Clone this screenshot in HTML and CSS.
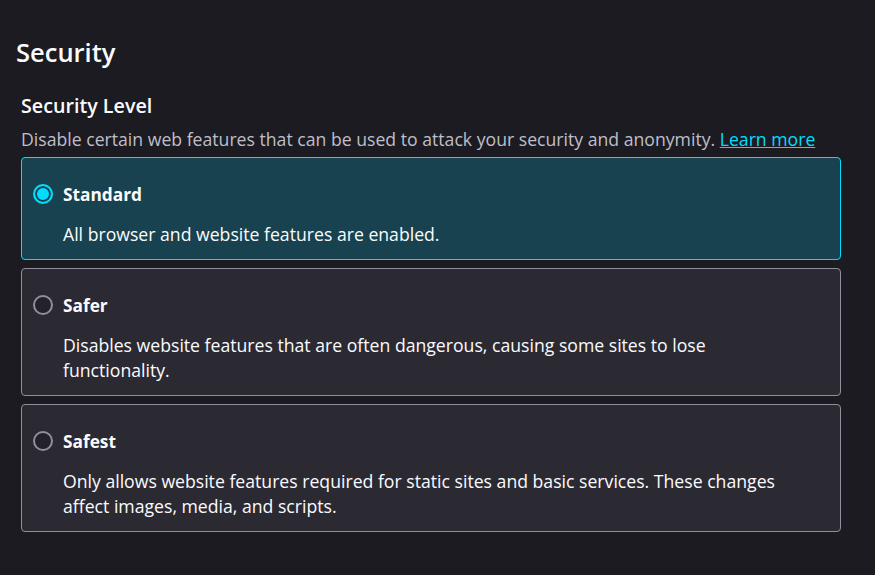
FILE: index.html
```html
<!DOCTYPE html>
<html>
<head>
<meta charset="utf-8">
<link rel="stylesheet" href="styles.css">
</head>
<body>
<main class="page">
  <h1 class="title">Security</h1>
  <h2 class="subtitle">Security Level</h2>
  <p class="intro">Disable certain web features that can be used to attack your security and anonymity. <a class="link" href="#">Learn more</a></p>
  <div class="options">
    <label class="option option-selected">
      <span class="option-head"><span class="radio radio-checked"></span><span class="option-name">Standard</span></span>
      <span class="option-desc">All browser and website features are enabled.</span>
    </label>
    <label class="option">
      <span class="option-head"><span class="radio"></span><span class="option-name">Safer</span></span>
      <span class="option-desc">Disables website features that are often dangerous, causing some sites to lose functionality.</span>
    </label>
    <label class="option">
      <span class="option-head"><span class="radio"></span><span class="option-name">Safest</span></span>
      <span class="option-desc">Only allows website features required for static sites and basic services. These changes affect images, media, and scripts.</span>
    </label>
  </div>
</main>
</body>
</html>
```
FILE: styles.css
```css
html, body {
  margin: 0;
  padding: 0;
  background: #1c1b22;
  color: #fbfbfe;
  font-family: "Open Sans", "Noto Sans", sans-serif;
}
.page {
  padding: 34px 34px 0 21px;
}
.title {
  margin: 0 0 0 -5px;
  font-size: 25.5px;
  font-weight: 600;
  line-height: 36px;
}
.subtitle {
  margin: 23px 0 0 0;
  font-size: 19.7px;
  font-weight: 600;
  line-height: 26px;
}
.intro {
  margin: 7px 0 0 0;
  font-size: 17.65px;
  line-height: 26px;
  color: #bfbfc9;
}
.link {
  color: #00ddff;
  text-decoration: underline;
}
.options {
  display: flex;
  flex-direction: column;
  gap: 8px;
  margin-top: 5px;
}
.option {
  display: flex;
  flex-direction: column;
  background: #2b2a33;
  border: 1px solid #8f8f9d;
  border-radius: 4px;
  padding: 24px 16px 12px 11px;
}
.option-selected {
  background: #18424f;
  border-color: #00ddff;
}
.option-head {
  display: flex;
  align-items: center;
  gap: 10px;
  height: 24px;
}
.radio {
  box-sizing: border-box;
  width: 20px;
  height: 20px;
  border-radius: 50%;
  border: 2px solid #8f8f9d;
  background: #23222b;
  flex: none;
}
.radio-checked {
  border-color: #00ddff;
  background: #00ddff;
  box-shadow: inset 0 0 0 2px #18424f;
}
.option-name {
  font-size: 17.3px;
  font-weight: 700;
}
.option-desc {
  margin: 16px 0 0 30px;
  font-size: 17.65px;
  line-height: 25px;
  max-width: 735px;
}
```
